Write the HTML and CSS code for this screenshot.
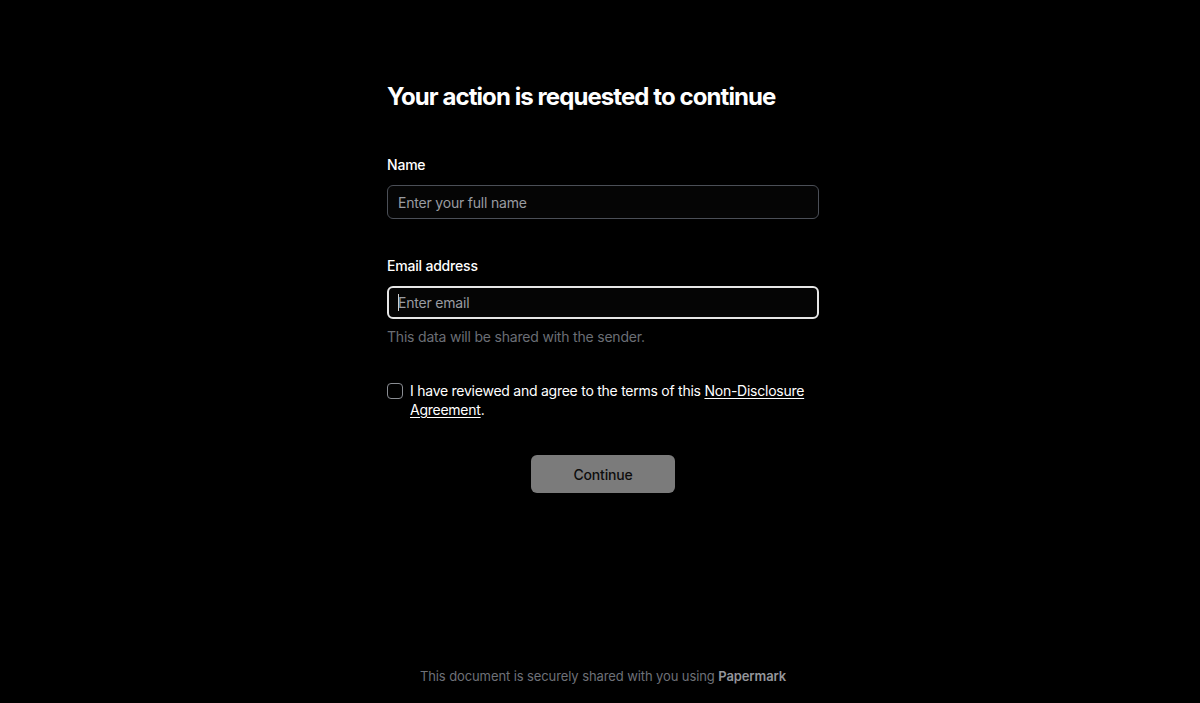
FILE: index.html
```html
<!DOCTYPE html>
<html lang="en">
<head>
<meta charset="utf-8">
<title>Your action is requested to continue</title>
<link rel="stylesheet" href="styles.css">
</head>
<body>
<div class="page">
  <main class="form">
    <h1 class="title">Your action is requested to continue</h1>
    <div class="field">
      <label class="label" for="name">Name</label>
      <input class="input" id="name" type="text" placeholder="Enter your full name">
    </div>
    <div class="field field-email">
      <label class="label" for="email">Email address</label>
      <div class="input-wrap">
        <input class="input input-focus" id="email" type="email" placeholder="Enter email">
        <span class="caret"></span>
      </div>
      <p class="help">This data will be shared with the sender.</p>
    </div>
    <div class="agree">
      <span class="checkbox"></span>
      <p class="agree-text">I have reviewed and agree to the terms of this <a class="link" href="#">Non-Disclosure Agreement</a>.</p>
    </div>
    <div class="actions">
      <button class="button" type="button">Continue</button>
    </div>
  </main>
  <footer class="footer">This document is securely shared with you using <strong class="brand">Papermark</strong></footer>
</div>
</body>
</html>
```
FILE: styles.css
```css
* { box-sizing: border-box; }
html, body { margin: 0; padding: 0; background: #000; }
body {
  font-family: Inter, "Noto Sans", "Liberation Sans", sans-serif;
  color: #fff;
  letter-spacing: -0.2px;
}
.page {
  min-height: 703px;
  display: flex;
  flex-direction: column;
  align-items: center;
  padding-left: 6px;
}
.form {
  width: 432px;
  padding-top: 81px;
  flex: 1;
}
.title {
  margin: 0;
  font-size: 24px;
  line-height: 32px;
  font-weight: 700;
  letter-spacing: -0.92px;
}
.field { margin-top: 42px; display: flex; flex-direction: column; }
.field-email { margin-top: 37px; }
.label {
  font-size: 14px;
  line-height: 20px;
  font-weight: 500;
  margin-bottom: 10px;
}
.input-wrap { position: relative; }
.input {
  width: 100%;
  height: 34px;
  border: 1px solid #4b4f57;
  border-radius: 6px;
  background: #050505;
  color: #fff;
  font-family: inherit;
  font-size: 14px;
  letter-spacing: -0.2px;
  padding: 0 10px;
  outline: none;
}
.input::placeholder { color: #9a9ca1; }
.input-focus {
  height: 33px;
  border: 2px solid #e6e6e6;
  padding: 0 9px;
}
.caret {
  position: absolute;
  left: 11px;
  top: 8px;
  width: 1px;
  height: 17px;
  background: #d0d0d0;
}
.help {
  margin: 8px 0 0;
  font-size: 14px;
  line-height: 20px;
  color: #6b6e75;
}
.agree {
  margin-top: 34px;
  display: flex;
  gap: 7px;
  align-items: flex-start;
}
.checkbox {
  flex: none;
  width: 16px;
  height: 16px;
  margin-top: 2px;
  border: 1px solid #8a8d93;
  border-radius: 4px;
}
.agree-text {
  margin: 0;
  font-size: 14px;
  line-height: 19px;
  letter-spacing: -0.25px;
  color: #fff;
}
.link { color: #fff; text-decoration: underline; text-underline-offset: 2px; }
.actions { display: flex; justify-content: center; margin-top: 36px; }
.button {
  width: 144px;
  height: 38px;
  border: none;
  border-radius: 6px;
  background: #7b7b7b;
  color: #0d0d0d;
  font-family: inherit;
  font-size: 14px;
  font-weight: 500;
  letter-spacing: -0.2px;
}
.footer {
  padding-bottom: 17px;
  font-size: 13px;
  line-height: 20px;
  letter-spacing: -0.1px;
  color: #6e7178;
}
.brand { color: #94969b; font-weight: 600; }
```
